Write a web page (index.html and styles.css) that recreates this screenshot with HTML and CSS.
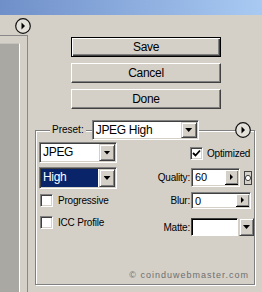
FILE: index.html
```html
<!DOCTYPE html>
<html lang="en">
	<head>
		<meta charset="UTF-8">
		<meta name="viewport" content="width=device-width, initial-scale=1.0">
		<title>Save for Web</title>
		<link rel="stylesheet" href="styles.css">
	</head>
	<body>
		<div class="titlebar"></div>
		<div class="toolbar">
			<span class="menu-btn">
				<svg width="16" height="16" viewBox="0 0 16 16"><circle cx="8" cy="8" r="7.3" fill="#e4e1da" stroke="#111" stroke-width="1.2"/><path d="M6.5 4.5 L10 8 L6.5 11.5 Z" fill="#000"/></svg>
			</span>
		</div>
		<div class="main">
			<div class="preview"><div class="preview-inner"></div></div>
			<div class="panel">
				<div class="actions">
					<button class="btn btn-default">Save</button>
					<button class="btn">Cancel</button>
					<button class="btn">Done</button>
				</div>
				<div class="group">
					<div class="group-head">
						<span class="group-label">Preset:</span>
						<div class="select preset">
							<span class="select-value">JPEG High</span>
							<span class="drop-btn"></span>
						</div>
						<span class="head-fill"></span>
						<span class="menu-btn">
							<svg width="16" height="16" viewBox="0 0 16 16"><circle cx="8" cy="8" r="7.3" fill="#e4e1da" stroke="#111" stroke-width="1.2"/><path d="M6.5 4.5 L10 8 L6.5 11.5 Z" fill="#000"/></svg>
						</span>
					</div>
					<div class="group-body">
						<div class="col-left">
							<div class="select format">
								<span class="select-value">JPEG</span>
								<span class="drop-btn"></span>
							</div>
							<div class="select quality-level">
								<span class="select-value selected">High</span>
								<span class="drop-btn"></span>
							</div>
							<label class="check-row progressive"><span class="check"></span>Progressive</label>
							<label class="check-row icc"><span class="check"></span>ICC Profile</label>
						</div>
						<div class="col-right">
							<label class="check-row optimized">
								<span class="check">
									<svg width="9" height="9" viewBox="0 0 9 9"><path d="M1 4 L3.5 6.5 L8 1.5" fill="none" stroke="#000" stroke-width="1.8"/></svg>
								</span>Optimized
							</label>
							<div class="field-row quality">
								<span class="field-label">Quality:</span>
								<div class="field">
									<span class="field-value">60</span>
									<span class="step-btn"></span>
								</div>
								<span class="mask-btn">
									<svg width="8" height="14" viewBox="0 0 8 14"><rect x="0.5" y="0.5" width="7" height="13" fill="#d4d0c8" stroke="#404040"/><circle cx="4" cy="7" r="2.6" fill="#fff" stroke="#404040"/></svg>
								</span>
							</div>
							<div class="field-row blur">
								<span class="field-label">Blur:</span>
								<div class="field">
									<span class="field-value">0</span>
									<span class="step-btn"></span>
								</div>
							</div>
							<div class="field-row matte">
								<span class="field-label">Matte:</span>
								<div class="field"></div>
								<span class="drop-btn"></span>
							</div>
						</div>
					</div>
					<div class="credit">© coinduwebmaster.com</div>
				</div>
			</div>
		</div>
	</body>
</html>
```

FILE: styles.css
```css
body {
	margin: 0;
	width: 262px;
	height: 292px;
	overflow: hidden;
	background-color: #d4d0c8;
	font-family: "Liberation Sans", Arial, sans-serif;
	font-size: 10px;
	color: #000;
}
.titlebar {
	height: 15px;
	background: linear-gradient(to right, #6f8fc9, #a8caf2);
}
.toolbar {
	height: 20px;
	padding-left: 15px;
	box-sizing: border-box;
	padding-top: 3px;
}
.menu-btn {
	display: block;
	width: 16px;
	height: 16px;
}
.menu-btn svg {
	display: block;
}
.main {
	display: flex;
	height: 257px;
}
.preview {
	width: 27px;
	border-top: 1px solid #888;
	border-right: 1px solid #888;
	padding-top: 7px;
}
.preview-inner {
	width: 19px;
	height: 100%;
	background-color: #a9a8a3;
	border-right: 1px solid #fff;
	border-top: 1px solid #c4c2bc;
}
.panel {
	flex: 1;
	display: flex;
	flex-direction: column;
}
.actions {
	display: flex;
	flex-direction: column;
	gap: 6px;
	margin: 2px 0 0 43px;
}
.btn {
	width: 150px;
	height: 20px;
	padding: 0;
	box-sizing: border-box;
	font-family: "Liberation Sans", Arial, sans-serif;
	font-size: 12px;
	letter-spacing: -0.3px;
	color: #000;
	background-color: #d4d0c8;
	border: 1px solid;
	border-color: #fff #404040 #404040 #fff;
	box-shadow: inset -1px -1px #808080;
}
.btn-default {
	border-color: #000;
	box-shadow: inset 1px 1px #fff, inset -1px -1px #404040, inset -2px -2px #808080;
}
.group {
	margin: 21px 0 0 7px;
	width: 220px;
	height: 155px;
	box-sizing: border-box;
	border: 1px solid #808080;
	box-shadow: inset 1px 1px #fff, 1px 1px #fff;
	display: flex;
	flex-direction: column;
}
.group-head {
	display: flex;
	align-items: center;
	height: 20px;
	margin-top: -11px;
	padding-right: 3px;
}
.group-label {
	margin-left: 14px;
	padding: 0 2px;
	background-color: #d4d0c8;
	line-height: 12px;
}
.head-fill {
	flex: 1;
}
.select {
	display: flex;
	box-sizing: border-box;
	border: 1px solid;
	border-color: #808080 #fff #fff #808080;
	box-shadow: inset 1px 1px #404040, inset -1px -1px #d4d0c8;
	background-color: #fff;
	padding: 1px;
}
.preset {
	width: 107px;
	height: 20px;
	margin-left: 6px;
}
.select-value {
	flex: 1;
	padding-left: 2px;
	font-size: 12px;
	letter-spacing: -0.3px;
	line-height: 16px;
}
.selected {
	background-color: #0a246a;
	color: #fff;
	margin-right: 1px;
}
.drop-btn {
	width: 16px;
	box-sizing: border-box;
	background-color: #d4d0c8;
	border: 1px solid;
	border-color: #d4d0c8 #404040 #404040 #d4d0c8;
	box-shadow: inset 1px 1px #fff, inset -1px -1px #808080;
	display: flex;
	align-items: center;
	justify-content: center;
}
.drop-btn::after {
	content: "";
	width: 7px;
	height: 4px;
	background-color: #000;
	clip-path: polygon(0 0, 100% 0, 50% 100%);
}
.group-body {
	display: flex;
	padding: 2px 0 0 3px;
}
.col-left {
	width: 88px;
	display: flex;
	flex-direction: column;
}
.format {
	height: 21px;
}
.quality-level {
	height: 22px;
	margin-top: 4px;
}
.check-row {
	display: flex;
	align-items: center;
	gap: 5px;
	height: 13px;
	letter-spacing: -0.2px;
	white-space: nowrap;
}
.check {
	width: 13px;
	height: 13px;
	box-sizing: border-box;
	border: 1px solid;
	border-color: #808080 #fff #fff #808080;
	box-shadow: inset 1px 1px #404040, inset -1px -1px #d4d0c8;
	background-color: #fff;
	display: flex;
	align-items: center;
	justify-content: center;
	flex: none;
}
.check svg {
	display: block;
}
.progressive {
	margin: 5px 0 0 1px;
}
.icc {
	margin: 9px 0 0 1px;
}
.col-right {
	flex: 1;
	display: flex;
	flex-direction: column;
	padding-left: 23px;
}
.optimized {
	margin: 5px 0 0 50px;
	gap: 4px;
}
.field-row {
	display: flex;
	align-items: center;
}
.field-label {
	width: 50px;
	text-align: right;
	padding-right: 1px;
	letter-spacing: -0.2px;
}
.field {
	display: flex;
	box-sizing: border-box;
	border: 1px solid;
	border-color: #808080 #fff #fff #808080;
	box-shadow: inset 1px 1px #404040, inset -1px -1px #d4d0c8;
	background-color: #fff;
	padding: 1px;
	height: 100%;
}
.field-value {
	flex: 1;
	padding-left: 2px;
	font-size: 11px;
	line-height: 14px;
}
.step-btn {
	width: 13px;
	background-color: #d4d0c8;
	border-bottom: 1px solid #000;
	box-shadow: inset 1px 1px #fff, inset -1px -1px #808080;
	display: flex;
	align-items: center;
	justify-content: center;
}
.step-btn::after {
	content: "";
	width: 3px;
	height: 6px;
	background-color: #000;
	clip-path: polygon(0 0, 100% 50%, 0 100%);
}
.quality {
	height: 19px;
	margin-top: 8px;
}
.quality .field {
	width: 49px;
}
.mask-btn {
	margin-left: 4px;
	height: 14px;
}
.mask-btn svg {
	display: block;
}
.blur {
	height: 17px;
	margin-top: 5px;
}
.blur .field {
	width: 60px;
}
.matte {
	height: 18px;
	margin-top: 9px;
}
.matte .field {
	width: 47px;
	border-color: #404040 #fff #fff #404040;
	box-shadow: inset 1px 1px #000;
}
.matte .drop-btn {
	width: 15px;
	height: 18px;
	margin-left: 1px;
}
.credit {
	margin-top: auto;
	padding: 0 5px 4px 0;
	text-align: right;
	font-size: 9px;
	letter-spacing: 1px;
	color: #6e6e6e;
}
```
